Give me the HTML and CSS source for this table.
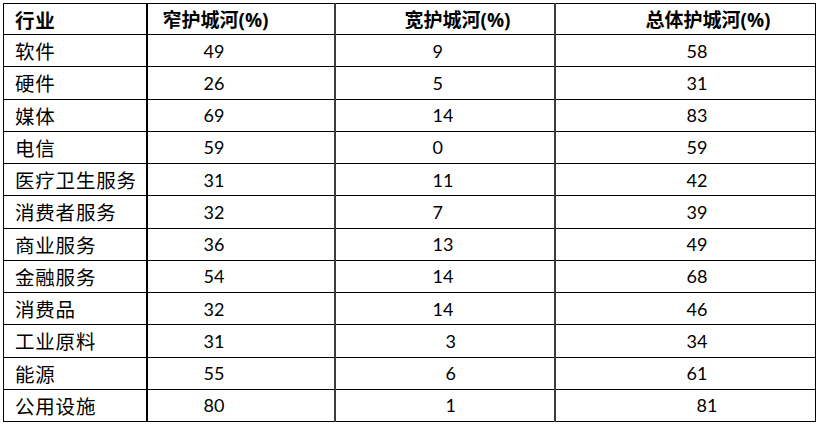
FILE: index.html
```html
<!DOCTYPE html>
<html lang="zh-CN">
<head>
<meta charset="utf-8">
<title>护城河行业分布</title>
<link rel="stylesheet" href="styles.css">
</head>
<body>
<table class="moat">
  <colgroup>
    <col class="c1"><col class="c2"><col class="c3"><col class="c4">
  </colgroup>
  <thead>
    <tr>
      <th class="name">行业</th>
      <th class="narrow">窄护城河(%)</th>
      <th class="wide">宽护城河(%)</th>
      <th class="total">总体护城河(%)</th>
    </tr>
  </thead>
  <tbody>
    <tr><td class="name">软件</td><td class="narrow">49</td><td class="wide">9</td><td class="total">58</td></tr>
    <tr><td class="name">硬件</td><td class="narrow">26</td><td class="wide">5</td><td class="total">31</td></tr>
    <tr><td class="name">媒体</td><td class="narrow">69</td><td class="wide">14</td><td class="total">83</td></tr>
    <tr><td class="name">电信</td><td class="narrow">59</td><td class="wide">0</td><td class="total">59</td></tr>
    <tr><td class="name">医疗卫生服务</td><td class="narrow">31</td><td class="wide">11</td><td class="total">42</td></tr>
    <tr><td class="name">消费者服务</td><td class="narrow">32</td><td class="wide">7</td><td class="total">39</td></tr>
    <tr><td class="name">商业服务</td><td class="narrow">36</td><td class="wide">13</td><td class="total">49</td></tr>
    <tr><td class="name">金融服务</td><td class="narrow">54</td><td class="wide">14</td><td class="total">68</td></tr>
    <tr><td class="name">消费品</td><td class="narrow">32</td><td class="wide">14</td><td class="total">46</td></tr>
    <tr><td class="name">工业原料</td><td class="narrow">31</td><td class="wide shift">3</td><td class="total">34</td></tr>
    <tr><td class="name">能源</td><td class="narrow">55</td><td class="wide shift">6</td><td class="total">61</td></tr>
    <tr class="last"><td class="name">公用设施</td><td class="narrow">80</td><td class="wide shift">1</td><td class="total shift">81<span class="stray"></span></td></tr>
  </tbody>
</table>
</body>
</html>
```
FILE: styles.css
```css
html, body {
  margin: 0;
  padding: 0;
  background: #ffffff;
}

body {
  padding: 3px 0 0 3px;
  font-family: "Lato", "Noto Sans CJK SC", sans-serif;
  color: #000;
}

.moat {
  border-collapse: collapse;
  table-layout: fixed;
  width: 812px;
  border: 1px solid #000;
}

.c1 { width: 143px; }
.c2 { width: 188px; }
.c3 { width: 220px; }
.c4 { width: 261px; }

.moat th,
.moat td {
  padding: 0;
  text-align: left;
  vertical-align: middle;
  white-space: nowrap;
  border-top: 1px solid #000;
  border-bottom: 1px solid #000;
}

.moat th {
  height: 30px;
  font-family: "Open Sans", "Noto Sans CJK SC", sans-serif;
  font-weight: 700;
  font-size: 19px;
}

.moat td {
  height: 31.25px;
  font-size: 18px;
}

.moat .name {
  padding-left: 11px;
  border-right: 2px solid #000;
  font-family: "Noto Sans CJK SC", sans-serif;
  font-size: 19.5px;
  letter-spacing: 0.8px;
}

.moat th.name {
  font-weight: 700;
}

.moat .narrow {
  border-right: 2px solid #3c3c3c;
}

.moat .wide {
  border-right: 2px solid #3c3c3c;
}

.moat th.narrow { padding-left: 15px; }
.moat th.wide { padding-left: 69px; }
.moat th.total { padding-left: 90px; }

.moat td.narrow { padding-left: 56px; }
.moat td.wide { padding-left: 97px; }
.moat td.wide.shift { padding-left: 110px; }
.moat td.total { padding-left: 131px; }
.moat td.total.shift { padding-left: 141px; position: relative; }

.stray {
  position: absolute;
  right: -4px;
  top: 0;
  width: 1px;
  height: 24px;
  background: #000;
}
```
